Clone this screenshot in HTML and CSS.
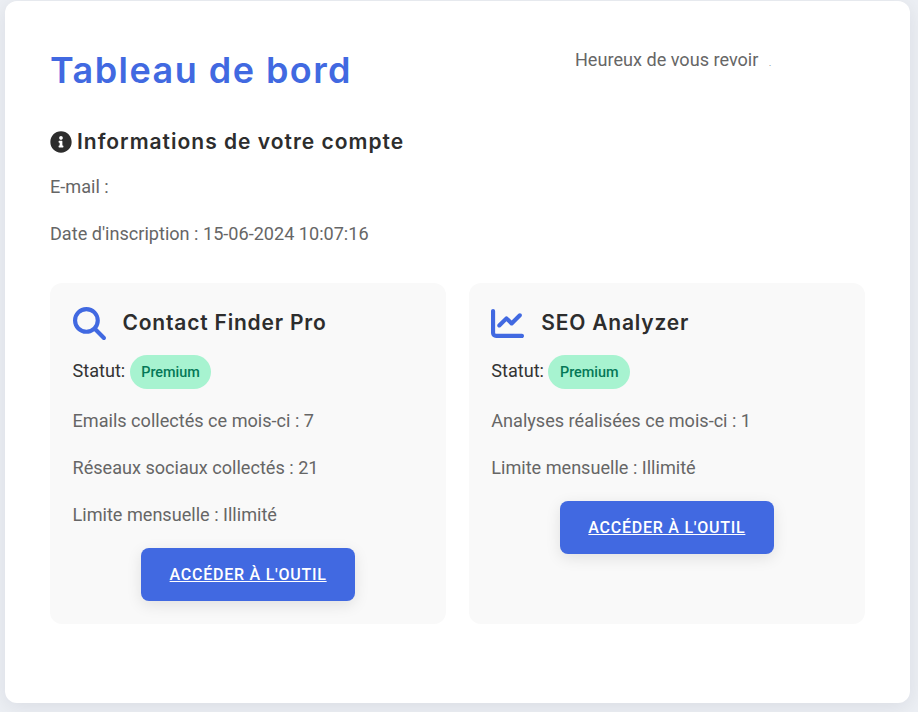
FILE: index.html
```html
<!DOCTYPE html>
<html>

<head>
    <title>Tableau de bord</title>
    <link rel="stylesheet" href="styles.css">
</head>

<body>
    <div class="container">
        <div class="header">
            <h1>Tableau de bord</h1>
            <p class="welcome">Heureux de vous revoir <span class="dot">.</span></p>
        </div>

        <div class="account">
            <h2>
                <svg class="info-icon" viewBox="0 0 512 512">
                    <path fill="#2d2d2d" d="M256 8C119 8 8 119 8 256s111 248 248 248 248-111 248-248S393 8 256 8zm0 110c23.200 0 42 18.800 42 42s-18.800 42-42 42-42-18.800-42-42 18.800-42 42-42zm56 254c0 6.600-5.400 12-12 12h-88c-6.600 0-12-5.400-12-12v-24c0-6.600 5.400-12 12-12h12v-64h-12c-6.600 0-12-5.400-12-12v-24c0-6.600 5.400-12 12-12h64c6.600 0 12 5.400 12 12v100h12c6.600 0 12 5.400 12 12v24z"/>
                </svg>
                Informations de votre compte
            </h2>
            <p>E-mail :</p>
            <p>Date d'inscription : 15-06-2024 10:07:16</p>
        </div>

        <div class="tools">
            <div class="tool-card">
                <div class="tool-title">
                    <svg class="tool-icon" viewBox="0 0 512 512">
                        <path fill="#4169e1" d="M416 208c0 45.900-14.900 88.300-40 122.700L502.600 457.400c12.500 12.500 12.500 32.800 0 45.300s-32.800 12.500-45.300 0L330.700 376c-34.400 25.200-76.800 40-122.700 40C93.100 416 0 322.900 0 208S93.100 0 208 0S416 93.100 416 208zM208 352a144 144 0 1 0 0-288 144 144 0 1 0 0 288z"/>
                    </svg>
                    <h3>Contact Finder Pro</h3>
                </div>
                <p class="status">Statut: <span class="badge">Premium</span></p>
                <p>Emails collectés ce mois-ci : 7</p>
                <p>Réseaux sociaux collectés : 21</p>
                <p>Limite mensuelle : Illimité</p>
                <a class="btn" href="#">ACCÉDER À L'OUTIL</a>
            </div>

            <div class="tool-card">
                <div class="tool-title">
                    <svg class="tool-icon" viewBox="0 0 512 512">
                        <path fill="#4169e1" d="M64 64c0-17.700-14.300-32-32-32S0 46.300 0 64V400c0 44.200 35.800 80 80 80H480c17.700 0 32-14.300 32-32s-14.300-32-32-32H80c-8.800 0-16-7.200-16-16V64zm406.600 86.600c12.500-12.500 12.500-32.800 0-45.300s-32.800-12.500-45.300 0L320 210.700l-57.400-57.400c-12.500-12.500-32.800-12.500-45.300 0l-112 112c-12.500 12.500-12.500 32.800 0 45.300s32.800 12.500 45.300 0L240 221.300l57.400 57.400c12.500 12.500 32.800 12.500 45.300 0l128-128z"/>
                    </svg>
                    <h3>SEO Analyzer</h3>
                </div>
                <p class="status">Statut: <span class="badge">Premium</span></p>
                <p>Analyses réalisées ce mois-ci : 1</p>
                <p>Limite mensuelle : Illimité</p>
                <a class="btn" href="#">ACCÉDER À L'OUTIL</a>
            </div>
        </div>
    </div>
</body>

</html>
```

FILE: styles.css
```css
* {
    box-sizing: border-box;
}

body {
    margin: 0;
    height: 712px;
    overflow: hidden;
    padding: 1px 8px 9px 5px;
    background: #eceff4;
    font-family: Roboto, sans-serif;
    font-size: 18.1px;
    line-height: 28px;
    color: #666;
}

.container {
    height: 702px;
    padding: 45px;
    background: white;
    border-radius: 12px;
    box-shadow: 0 4px 20px rgba(0, 0, 40, 0.08);
}

h1,
h2,
h3 {
    margin: 0;
    font-family: Inter, sans-serif;
    font-weight: 600;
}

p {
    margin: 0 0 19px;
}

.header {
    display: flex;
    justify-content: space-between;
    align-items: flex-start;
    padding-right: 94px;
}

h1 {
    font-size: 36px;
    line-height: 48px;
    letter-spacing: 1.45px;
    color: #4169e1;
}

.welcome {
    margin: 0;
}

.dot {
    font-size: 8px;
    margin-left: 6px;
}

.account {
    margin-top: 32px;
}

h2 {
    display: flex;
    align-items: center;
    gap: 5px;
    font-size: 21px;
    line-height: 32px;
    letter-spacing: 1px;
    color: #2d2d2d;
    margin-bottom: 15px;
}

.info-icon {
    width: 22px;
    height: 22px;
}

.tools {
    display: grid;
    grid-template-columns: 1fr 1fr;
    gap: 22.5px;
    margin-top: 35px;
}

.tool-card {
    height: 341px;
    padding: 23px 22.5px 22px;
    background: #f9f9f9;
    border-radius: 12px;
}

.tool-title {
    display: flex;
    align-items: center;
    gap: 17px;
    margin-bottom: 15px;
}

.tool-icon {
    width: 33px;
    height: 33px;
}

h3 {
    font-size: 21px;
    line-height: 34px;
    letter-spacing: 0.8px;
    color: #2d2d2d;
}

.status {
    color: #333;
    margin-bottom: 18px;
}

.badge {
    display: inline-block;
    padding: 4px 11.5px 2px;
    background: #a7f3d0;
    color: #047857;
    border-radius: 17px;
    font-size: 14.4px;
    font-weight: 500;
}

.btn {
    display: block;
    width: 214px;
    margin: 19px auto 0;
    padding: 12.5px 0;
    background: #4169e1;
    color: white;
    text-align: center;
    font-weight: 500;
    font-size: 16px;
    letter-spacing: 0.75px;
    border-radius: 8px;
    box-shadow: 0 4px 15px rgba(0, 0, 0, 0.1);
}
```
